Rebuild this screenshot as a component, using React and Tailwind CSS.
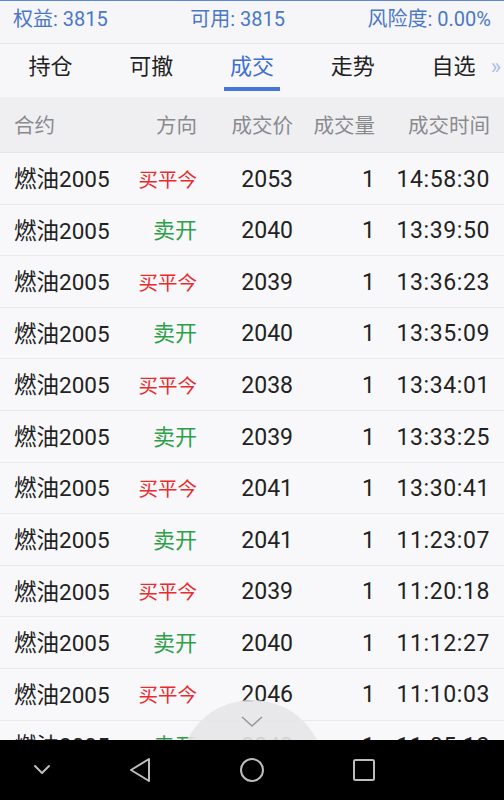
const trades = [
  { side: 'close', price: 2053, time: '14:58:30' },
  { side: 'open', price: 2040, time: '13:39:50' },
  { side: 'close', price: 2039, time: '13:36:23' },
  { side: 'open', price: 2040, time: '13:35:09' },
  { side: 'close', price: 2038, time: '13:34:01' },
  { side: 'open', price: 2039, time: '13:33:25' },
  { side: 'close', price: 2041, time: '13:30:41' },
  { side: 'open', price: 2041, time: '11:23:07' },
  { side: 'close', price: 2039, time: '11:20:18' },
  { side: 'open', price: 2040, time: '11:12:27' },
  { side: 'close', price: 2046, time: '11:10:03' },
  { side: 'open', price: 2040, time: '11:05:12' },
];

const tabs = ['持仓', '可撤', '成交', '走势', '自选'];

const TradeRow = ({ trade }) => (
  <div className="flex h-[51.6px] shrink-0 items-center border-b border-[#e9e9ec] px-[14px] pt-[3px] text-[23px] text-[#222]">
    <div className="w-[106px] text-[22.5px]">燃油2005</div>
    <div className="w-[77px] text-right">
      {trade.side === 'close' ? (
        <span className="text-[19.5px] text-[#e82c2c]">买平今</span>
      ) : (
        <span className="text-[22px] text-[#2ea04a]">卖开</span>
      )}
    </div>
    <div className="w-[96px] text-right">{trade.price}</div>
    <div className="w-[82px] text-right">1</div>
    <div className="w-[115px] text-right tracking-[0.6px]">{trade.time}</div>
  </div>
);

const App = () => {
  return (
    <div
      className="relative flex h-[800px] w-[504px] flex-col overflow-hidden bg-[#f8f8fa]"
      style={{ fontFamily: 'Roboto, "Noto Sans CJK SC", sans-serif' }}
    >
      <div className="flex h-[44px] shrink-0 items-center justify-between border-t border-b border-t-[#5b86d6] border-b-[#e6e6e9] bg-[#f6f6f8] px-[13px] pb-[6px] text-[20px] text-[#4a78c8]">
        <span>权益: 3815</span>
        <span>可用: 3815</span>
        <span>风险度: 0.00%</span>
      </div>

      <div className="relative flex h-[53px] shrink-0 bg-[#f7f7f9]">
        {tabs.map((tab) => (
          <div key={tab} className="relative flex flex-1 items-center justify-center pb-[8px] text-[22px]">
            <span className={tab === '成交' ? 'text-[#3f6fd2]' : 'text-[#222]'}>{tab}</span>
            {tab === '成交' && (
              <div className="absolute bottom-[6px] left-1/2 h-[4px] w-[56px] -translate-x-1/2 bg-[#4677d8]" />
            )}
          </div>
        ))}
        <span className="absolute right-[3px] top-[6px] text-[22px] text-[#a8bfe8]">»</span>
      </div>

      <div className="flex h-[56px] shrink-0 items-center border-b border-[#e6e6e9] bg-[#efeff2] px-[14px] pt-[3px] text-[20.5px] text-[#8a8a8e]">
        <div className="w-[106px]">合约</div>
        <div className="w-[77px] text-right">方向</div>
        <div className="w-[96px] text-right">成交价</div>
        <div className="w-[82px] text-right">成交量</div>
        <div className="w-[115px] text-right">成交时间</div>
      </div>

      <div className="flex min-h-0 flex-1 flex-col overflow-hidden">
        {trades.map((trade, i) => (
          <TradeRow key={i} trade={trade} />
        ))}
      </div>

      <div className="absolute left-[179px] top-[700px] h-[146px] w-[146px] rounded-full bg-[#e6e6e8]/90" />
      <svg className="absolute left-[241px] top-[716px]" width="22" height="12" viewBox="0 0 22 12">
        <path d="M1 1 L11 10 L21 1" fill="none" stroke="#9a9a9e" strokeWidth="1.6" />
      </svg>

      <div className="relative flex h-[60px] shrink-0 items-center bg-black">
        <svg className="absolute left-[33px] top-[24px]" width="18" height="11" viewBox="0 0 18 11">
          <path d="M2 2 L9 9 L16 2" fill="none" stroke="#bdbdbd" strokeWidth="2" strokeLinecap="round" strokeLinejoin="round" />
        </svg>
        <svg className="absolute left-[128px] top-[17px]" width="24" height="26" viewBox="0 0 24 26">
          <path d="M21 2 L3 13 L21 24 Z" fill="none" stroke="#bdbdbd" strokeWidth="2" strokeLinejoin="round" />
        </svg>
        <svg className="absolute left-[239px] top-[17px]" width="26" height="26" viewBox="0 0 26 26">
          <circle cx="13" cy="13" r="11" fill="none" stroke="#bdbdbd" strokeWidth="2" />
        </svg>
        <svg className="absolute left-[352px] top-[18px]" width="24" height="24" viewBox="0 0 24 24">
          <rect x="2" y="2" width="20" height="20" rx="1.5" fill="none" stroke="#bdbdbd" strokeWidth="2" />
        </svg>
      </div>
    </div>
  );
};

export default App;
